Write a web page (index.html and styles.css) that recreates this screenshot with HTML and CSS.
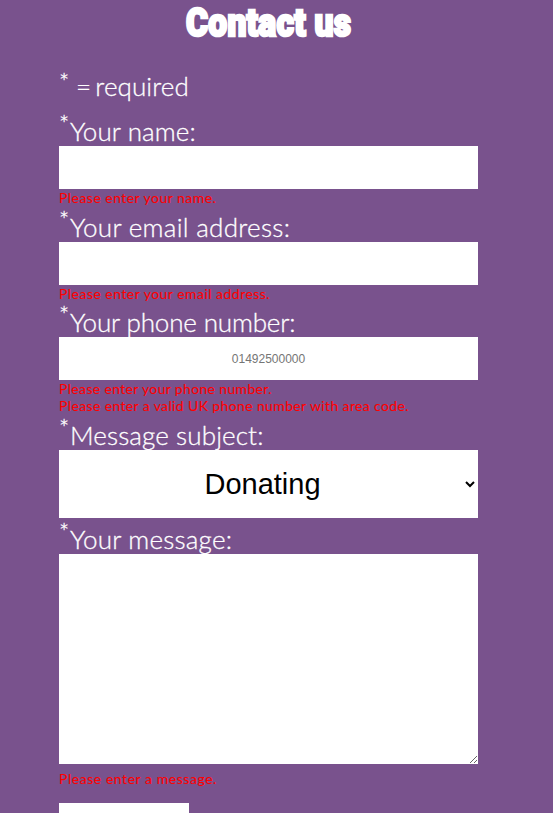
FILE: index.html
```html
<!DOCTYPE html>
<html lang="en">
<head>
<meta charset="utf-8">
<title>Contact us</title>
<link rel="stylesheet" href="styles.css">
</head>
<body>
<main class="contact">
<h1 class="title">Contact us</h1>
<form class="form">
<p class="required"><span class="star">*</span><span class="t-required">= required</span></p>
<label class="label" for="name"><span class="star">*</span><span class="t-name">Your name:</span></label>
<input class="control" id="name" type="text">
<p class="error e-name">Please enter your name.</p>
<label class="label" for="email"><span class="star">*</span><span class="t-email">Your email address:</span></label>
<input class="control" id="email" type="email">
<p class="error e-email">Please enter your email address.</p>
<label class="label label-phone" for="phone"><span class="star">*</span><span class="t-phone">Your phone number:</span></label>
<input class="control" id="phone" type="tel" placeholder="01492500000">
<p class="error e-phone">Please enter your phone number.</p>
<p class="error e-valid">Please enter a valid UK phone number with area code.</p>
<label class="label" for="subject"><span class="star">*</span><span class="t-subject">Message subject:</span></label>
<select class="control select" id="subject"><option>Donating</option></select>
<label class="label" for="message"><span class="star">*</span><span class="t-message">Your message:</span></label>
<textarea class="control message" id="message"></textarea>
<p class="error e-message">Please enter a message.</p>
<button class="submit" type="button" aria-label="Send"></button>
</form>
</main>
</body>
</html>
```
FILE: styles.css
```css
* { box-sizing: border-box; }
html { overflow: hidden; }
body { margin: 0; height: 813px; overflow: hidden; background: #79528d; color: #fff; font-family: Lato, sans-serif; }
.contact { display: flex; flex-direction: column; }
.title { margin: 0 0 0 186px; height: 72px; font: 900 39px/47px Roboto, sans-serif; -webkit-text-stroke: 2.6px #fff; letter-spacing: 0.3px; white-space: nowrap; transform: scaleX(.86); transform-origin: 0 0; }
.form { display: flex; flex-direction: column; width: 419px; margin-left: 59px; }
.required, .label { display: flex; height: 36px; margin: 0; font-weight: 300; font-size: 26px; line-height: 42px; white-space: nowrap; -webkit-text-stroke: .3px #fff; }
.required { height: 38px; line-height: 28px; }
.star { flex: none; width: 11px; font-size: 24px; line-height: 27px; }
.required .star { width: 17px; line-height: 19px; }
.t-required { letter-spacing: .1px; word-spacing: -3px; }
.t-name { letter-spacing: .1px; }
.t-email { letter-spacing: .3px; }
.t-phone { letter-spacing: -.15px; }
.t-subject { letter-spacing: .12px; }
.t-message { letter-spacing: .22px; }
.label-phone { margin-top: -1px; }
.control { display: block; width: 100%; height: 43px; margin: 0; padding: 0; border: 0; border-radius: 0; background: #fff; color: #000; font: 12px "Liberation Sans", sans-serif; text-align: center; outline: 0; }
.control::placeholder { color: #757575; }
.select { height: 68px; font-size: 29px; text-align-last: center; }
.message { height: 210px; resize: vertical; }
.error { height: 17px; margin: 0; color: #f00; font-size: 14px; font-weight: 400; line-height: 17px; white-space: nowrap; -webkit-text-stroke: .1px #f00; }
.e-name { letter-spacing: .46px; }
.e-email { letter-spacing: .47px; }
.e-phone { letter-spacing: .34px; }
.e-valid { letter-spacing: .37px; }
.e-message { margin: 6px 0 16px; letter-spacing: .55px; }
.submit { width: 130px; height: 44px; flex: none; padding: 0; border: 0; background: #fff; }
```
